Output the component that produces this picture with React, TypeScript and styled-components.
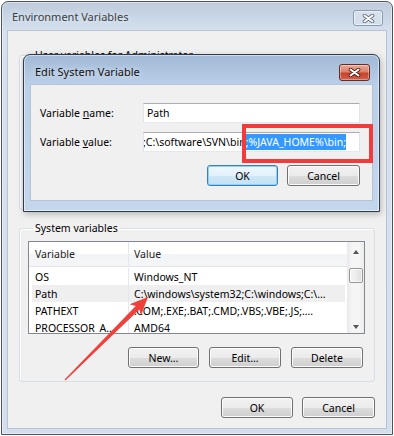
import React from 'react'
import styled, { createGlobalStyle, css } from 'styled-components'

const GlobalStyle = createGlobalStyle`
  html, body {
    margin: 0;
    padding: 0;
    background: #ffffff;
  }
  body {
    font-family: "Noto Sans", "Open Sans", sans-serif;
    font-size: 10.5px;
    color: #000;
  }
  #root {
    width: 394px;
    height: 436px;
    overflow: hidden;
  }
`

const Desktop = styled.div`
  position: relative;
  width: 394px;
  height: 436px;
  padding: 1px;
  box-sizing: border-box;
`

const Window = styled.div<{ active?: boolean }>(
  ({ active }) => css`
    display: flex;
    flex-direction: column;
    box-sizing: border-box;
    border: 1px solid ${active ? '#2f3b4a' : '#4d545d'};
    border-radius: 7px 7px 0 0;
    background: ${active
      ? 'linear-gradient(180deg, #a1b9d6 0%, #bacfe8 30px, #c3d6ec 100%)'
      : 'linear-gradient(180deg, #bdcbdc 0%, #d5e1ee 30px, #d3dfec 100%)'};
    box-shadow: inset 0 0 0 1px rgba(255, 255, 255, 0.45);
  `,
)

const OuterWindow = styled(Window)`
  width: 100%;
  height: 100%;
`

const InnerWindow = styled(Window)`
  position: absolute;
  left: 23px;
  top: 54px;
  width: 357px;
  height: 158px;
  box-shadow: inset 0 0 0 1px rgba(255, 255, 255, 0.5), 1px 2px 6px rgba(0, 0, 0, 0.25);
`

const TitleBar = styled.div<{ height: number; padLeft: number; padRight: number }>(
  ({ height, padLeft, padRight }) => css`
    display: flex;
    align-items: flex-start;
    justify-content: space-between;
    height: ${height}px;
    padding: 0 ${padRight}px 0 ${padLeft}px;
    flex-shrink: 0;
  `,
)

const TitleText = styled.span<{ active?: boolean; top: number }>(
  ({ active, top }) => css`
    margin-top: ${top}px;
    font-size: 11px;
    color: ${active ? '#111' : '#3a3f46'};
    text-shadow: 0 0 6px rgba(255, 255, 255, 0.9);
  `,
)

const CloseButton = styled.div<{ active?: boolean; top: number; w: number; h: number }>(
  ({ active, top, w, h }) => css`
    margin-top: ${top}px;
    width: ${w}px;
    height: ${h}px;
    box-sizing: border-box;
    border-radius: 3px;
    display: flex;
    align-items: center;
    justify-content: center;
    border: 1px solid ${active ? '#6b2a22' : '#8a9bb2'};
    background: ${active
      ? 'linear-gradient(180deg, #e9a898 0%, #d9826c 45%, #c4432b 55%, #d5604a 100%)'
      : 'linear-gradient(180deg, rgba(255,255,255,0.35), rgba(255,255,255,0.1))'};
    box-shadow: inset 0 0 0 1px rgba(255, 255, 255, ${active ? 0.35 : 0.5});
  `,
)

const Client = styled.div<{ side: number; bottom: number }>(
  ({ side, bottom }) => css`
    flex: 1;
    margin: 0 ${side}px ${bottom}px;
    background: #f0f0f0;
    border: 1px solid #b5c3d3;
    box-sizing: border-box;
    display: flex;
    flex-direction: column;
  `,
)

const OuterBody = styled.div`
  display: flex;
  flex-direction: column;
  padding: 17px 11px 0 11px;
`

const Group = styled.fieldset<{ h?: number }>(
  ({ h }) => css`
    margin: 0;
    padding: 6px 9px 13px 8px;
    border: 1px solid #d5dfe5;
    border-radius: 3px;
    box-shadow: inset 1px 1px 0 #ffffff;
    min-width: 0;
    ${h ? `height: ${h}px; box-sizing: border-box;` : ''}
  `,
)

const GroupLabel = styled.legend`
  margin-left: 5px;
  padding: 0 2px;
  line-height: 14px;
  font-size: 10.5px;
`

const Spacer = styled.div<{ h: number }>(
  ({ h }) => css`
    height: ${h}px;
    flex-shrink: 0;
  `,
)

const ListView = styled.div`
  display: grid;
  grid-template-columns: 1fr 17px;
  height: 93px;
  border: 1px solid #828790;
  background: #ffffff;
  box-sizing: border-box;
  overflow: hidden;
`

const ListBody = styled.div`
  display: flex;
  flex-direction: column;
  min-width: 0;
`

const ListRow = styled.div<{ header?: boolean; selected?: boolean }>(
  ({ header, selected }) => css`
    display: grid;
    grid-template-columns: 99px 1fr;
    height: ${header ? 24 : 17}px;
    flex-shrink: 0;
    align-items: center;
    white-space: nowrap;
    ${header &&
    css`
      background: linear-gradient(180deg, #ffffff 0%, #ffffff 50%, #f3f4f6 51%, #f4f5f7 100%);
      border-bottom: 1px solid #e2e5ea;
      color: #1e1e1e;
    `}
    ${selected &&
    css`
      background: linear-gradient(90deg, transparent 3px, #efefef 3px, #efefef calc(100% - 2px), transparent calc(100% - 2px));
    `}
  `,
)

const Cell = styled.span<{ header?: boolean }>(
  ({ header }) => css`
    padding-left: 6px;
    overflow: hidden;
    height: 100%;
    display: flex;
    align-items: center;
    ${header &&
    css`
      & + & {
        border-left: 1px solid #e3e8ee;
        padding-left: 5px;
      }
    `}
  `,
)

const ScrollBar = styled.div`
  display: flex;
  flex-direction: column;
  align-items: center;
  background: linear-gradient(90deg, #e9e9e9 0%, #f5f5f5 30%, #f5f5f5 70%, #ececec 100%);
`

const ScrollArrow = styled.div<{ down?: boolean }>(
  ({ down }) => css`
    width: 0;
    height: 0;
    border-left: 3.5px solid transparent;
    border-right: 3.5px solid transparent;
    ${down ? 'border-top: 4px solid #555;' : 'border-bottom: 4px solid #555;'}
    margin-top: ${down ? 'auto' : '8px'};
    margin-bottom: ${down ? '7px' : '0'};
  `,
)

const ScrollThumb = styled.div`
  margin-top: 14px;
  width: 14px;
  height: 15px;
  box-sizing: border-box;
  border: 1px solid #979797;
  border-radius: 2px;
  background: linear-gradient(90deg, #f4f4f4 0%, #ececec 50%, #dcdcdc 100%);
  box-shadow: inset 0 0 0 1px rgba(255, 255, 255, 0.7);
`

const ButtonRow = styled.div<{ top: number; right?: number; gap?: number }>(
  ({ top, right = 0, gap = 9 }) => css`
    display: flex;
    justify-content: flex-end;
    gap: ${gap}px;
    margin-top: ${top}px;
    margin-right: ${right}px;
  `,
)

const Button = styled.div<{ w?: number; primary?: boolean }>(
  ({ w = 72, primary }) => css`
    width: ${w}px;
    height: 21px;
    box-sizing: border-box;
    border: 1px solid ${primary ? '#3c7fb1' : '#707070'};
    border-radius: 3px;
    display: flex;
    align-items: center;
    justify-content: center;
    font-size: 10.5px;
    color: #000;
    background: ${primary
      ? 'linear-gradient(180deg, #eef7fd 0%, #e3f1fb 50%, #cfe7f7 51%, #c4e1f5 100%)'
      : 'linear-gradient(180deg, #f2f2f2 0%, #ebebeb 50%, #dddddd 51%, #cfcfcf 100%)'};
    box-shadow: inset 0 0 0 1px ${primary ? '#8fd0f5' : '#fcfcfc'};
  `,
)

const InnerBody = styled.div`
  display: flex;
  flex-direction: column;
  padding: 18px 11px 0 9px;
`

const FieldGrid = styled.div`
  display: grid;
  grid-template-columns: 103px 217px;
  row-gap: 9px;
  align-items: center;
`

const FieldLabel = styled.label`
  font-size: 10.5px;
`

const TextBox = styled.div`
  height: 20px;
  box-sizing: border-box;
  border: 1px solid #e2e3ea;
  border-top-color: #abadb3;
  border-bottom-color: #e3e9ef;
  background: #ffffff;
  display: flex;
  align-items: center;
  padding-left: 3px;
  white-space: nowrap;
  overflow: hidden;
  font-size: 10.5px;
`

const Scrolled = styled.span`
  margin-left: -4px;
`

const Selected = styled.span`
  background: #3399ff;
  color: #ffffff;
  padding: 1px 0;
`

const Annotation = styled.div`
  position: absolute;
  left: 242px;
  top: 124px;
  width: 131px;
  height: 39px;
  box-sizing: border-box;
  border: 4px solid #f23c3c;
  pointer-events: none;
`

const ArrowLayer = styled.svg`
  position: absolute;
  left: 0;
  top: 0;
  pointer-events: none;
`

const CloseGlyph: React.FC<{ active?: boolean }> = ({ active }) => (
  <svg width="13" height="9" viewBox="0 0 13 9">
    <path
      d="M2.5 1.5 L10.5 7.5 M10.5 1.5 L2.5 7.5"
      stroke={active ? '#4a1810' : '#5e6b7c'}
      strokeWidth="3.6"
      strokeLinecap="round"
      fill="none"
    />
    <path
      d="M2.5 1.5 L10.5 7.5 M10.5 1.5 L2.5 7.5"
      stroke="#ffffff"
      strokeWidth="2"
      strokeLinecap="round"
      fill="none"
    />
  </svg>
)

const systemVars = [
  { name: 'OS', value: 'Windows_NT' },
  { name: 'Path', value: 'C:\\windows\\system32;C:\\windows;C:\\…', selected: true },
  { name: 'PATHEXT', value: '.COM;.EXE;.BAT;.CMD;.VBS;.VBE;.JS;….' },
  { name: 'PROCESSOR_A…', value: 'AMD64' },
]

export default function App() {
  return (
    <>
      <GlobalStyle />
      <Desktop>
        <OuterWindow>
          <TitleBar height={28} padLeft={10} padRight={9}>
            <TitleText top={7}>Environment Variables</TitleText>
            <CloseButton top={8} w={30} h={16}>
              <CloseGlyph />
            </CloseButton>
          </TitleBar>
          <Client side={5} bottom={5}>
            <OuterBody>
              <Group h={162}>
                <GroupLabel>User variables for Administrator</GroupLabel>
              </Group>
              <Spacer h={11} />
              <Group>
                <GroupLabel>System variables</GroupLabel>
                <ListView>
                  <ListBody>
                    <ListRow header>
                      <Cell header>Variable</Cell>
                      <Cell header>Value</Cell>
                    </ListRow>
                    <Spacer h={1} />
                    {systemVars.map((v) => (
                      <ListRow key={v.name} selected={v.selected}>
                        <Cell>{v.name}</Cell>
                        <Cell>{v.value}</Cell>
                      </ListRow>
                    ))}
                  </ListBody>
                  <ScrollBar>
                    <ScrollArrow />
                    <ScrollThumb />
                    <ScrollArrow down />
                  </ScrollBar>
                </ListView>
                <ButtonRow top={13} right={2} gap={10}>
                  <Button w={71}>New…</Button>
                  <Button>Edit…</Button>
                  <Button>Delete</Button>
                </ButtonRow>
              </Group>
              <ButtonRow top={15} right={0}>
                <Button>OK</Button>
                <Button w={73}>Cancel</Button>
              </ButtonRow>
            </OuterBody>
          </Client>
        </OuterWindow>

        <InnerWindow active>
          <TitleBar height={29} padLeft={11} padRight={9}>
            <TitleText active top={9}>
              Edit System Variable
            </TitleText>
            <CloseButton active top={9} w={31} h={17}>
              <CloseGlyph active />
            </CloseButton>
          </TitleBar>
          <Client side={6} bottom={10}>
            <InnerBody>
              <FieldGrid>
                <FieldLabel>
                  Variable <u>n</u>ame:
                </FieldLabel>
                <TextBox>Path</TextBox>
                <FieldLabel>
                  Variable <u>v</u>alue:
                </FieldLabel>
                <TextBox>
                  <Scrolled>
                    ;C:\software\SVN\bin<Selected>;%JAVA_HOME%\bin;</Selected>
                  </Scrolled>
                </TextBox>
              </FieldGrid>
              <ButtonRow top={13} right={1}>
                <Button w={71} primary>
                  OK
                </Button>
                <Button w={73}>Cancel</Button>
              </ButtonRow>
            </InnerBody>
          </Client>
        </InnerWindow>

        <Annotation />
        <ArrowLayer width="394" height="436" viewBox="0 0 394 436">
          <polygon
            points="64.6,379.6 135.7,305.9 129.6,304.2 148,297 141,315.4 139.3,309.5 65.4,380.4"
            fill="#f0403c"
          />
        </ArrowLayer>
      </Desktop>
    </>
  )
}
